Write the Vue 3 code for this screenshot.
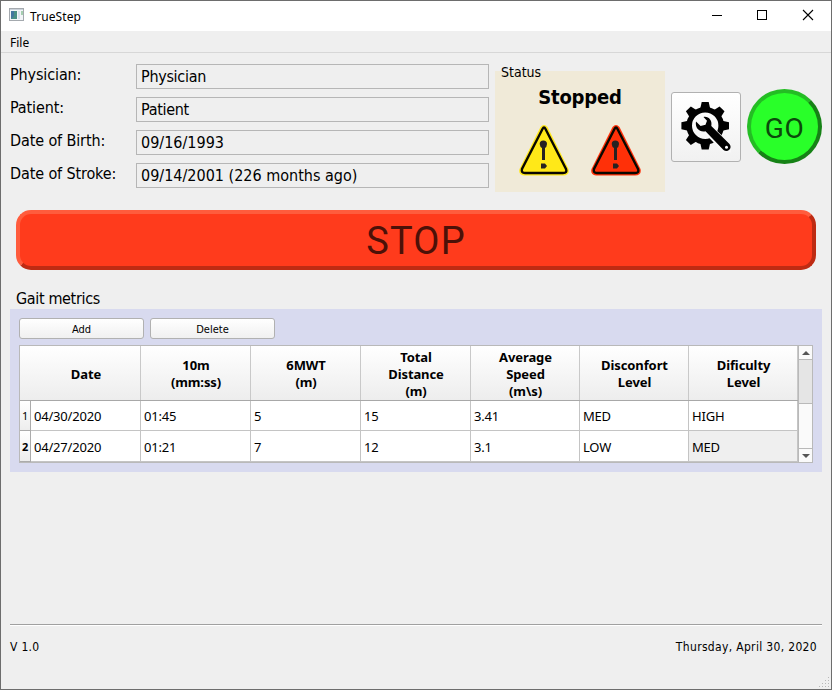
<script setup>
const fields = [
  { label: 'Physician:', value: 'Physician' },
  { label: 'Patient:', value: 'Patient' },
  { label: 'Date of Birth:', value: '09/16/1993' },
  { label: 'Date of Stroke:', value: '09/14/2001 (226 months ago)' },
]
const headers = ['Date', '10m\n(mm:ss)', '6MWT\n(m)', 'Total\nDistance\n(m)', 'Average\nSpeed\n(m\\s)', 'Disconfort\nLevel', 'Dificulty\nLevel']
const rows = [
  ['04/30/2020', '01:45', '5', '15', '3.41', 'MED', 'HIGH'],
  ['04/27/2020', '01:21', '7', '12', '3.1', 'LOW', 'MED'],
]
const warnings = ['#ffe818', '#ff3008']
const teeth = [0, 45, 90, 135, 180, 225, 270, 315]
</script>

<template>
  <div class="window">
    <header class="titlebar">
      <svg class="app-icon" width="15" height="13" viewBox="0 0 15 13">
        <rect x=".5" y=".5" width="14" height="12" fill="#f3f5f8" stroke="#a4a9ae" />
        <path d="M1 1.5H14" stroke="#cbd2da" />
        <rect x="2" y="3" width="6" height="8" fill="#4b8f86" />
        <path d="M2 3H5V8L2 11Z" fill="#4475a0" />
        <rect x="9" y="3" width="2" height="8" fill="#dce1ed" />
        <rect x="12" y="3" width="2" height="4" fill="#a5ceb0" />
      </svg>
      <span class="app-title">TrueStep</span>
      <svg class="controls" width="105" height="12" viewBox="0 0 105 12" fill="none" stroke="#000">
        <path d="M0 6.5H10" />
        <rect x="45.5" y="1.500" width="9" height="9" />
        <path d="M91 1L101 11M101 1L91 11" stroke-width="1.1" />
      </svg>
    </header>
    <nav class="menu"><span>File</span></nav>

    <main>
      <section class="top">
        <div class="form">
          <div v-for="f in fields" :key="f.label" class="field">
            <label>{{ f.label }}</label>
            <div class="value">{{ f.value }}</div>
          </div>
        </div>
        <div class="status">
          <div class="legend">Status</div>
          <div class="status-box">
            <strong>Stopped</strong>
            <div class="warnings">
              <svg v-for="c in warnings" :key="c" width="50" height="51" viewBox="0 0 50 51">
                <path d="M21.500 2Q25-2 28.500 2L49.500 44Q51 50.500 44 50.500H5Q-1 49.500 .5 44Z" :fill="c" />
                <path d="M23.500 4Q25 1 26.500 4L47 44Q48.500 48 44 48H6Q2 48 3 44Z" :fill="c" stroke="#090700" stroke-width="2.4" />
                <path d="M20.700 19Q20.700 15.500 24.300 15.500Q28 15.500 28 19Q27.800 22 26 23V35H23V23Q21 22 20.700 19Z" fill="#262222" />
                <path d="M22 38.500L26 38.500L28 41L26 43.500L22 43.500Z" fill="#262222" />
              </svg>
            </div>
          </div>
        </div>
        <button class="settings">
          <svg width="50" height="52" viewBox="0 0 50 52">
            <g transform="translate(24.200 24.700)">
              <path v-for="a in teeth" :key="a" :transform="`rotate(${a})`" d="M-5-17L-3.500-23.800H3.500L5-17Z" />
              <circle r="16" fill="none" stroke="#000" stroke-width="5.600" />
            </g>
            <path d="M29 25L49 44.500V50H43L24 30.500Z" fill="#f8f8f8" stroke="#f8f8f8" stroke-width="3" />
            <path d="M22.500 16C27.500 15 31.500 19.500 30.300 25L48.500 43C50 45 50 47 48.300 48.800C46.500 50.500 44.500 50.500 42.500 49L24.500 30.300C18.500 31.500 13.800 27 15 20.500L19.600 25L24.500 23.800L26 19.800Z" />
            <circle cx="45.500" cy="46.300" r="1.500" fill="#fff" />
          </svg>
        </button>
        <button class="go"><span>GO</span></button>
      </section>

      <button class="stop"><span>STOP</span></button>

      <h2>Gait metrics</h2>
      <section class="metrics">
        <div class="actions">
          <button>Add</button>
          <button>Delete</button>
        </div>
        <div class="table">
          <div class="grid">
            <div class="row head">
              <div v-for="h in headers" :key="h" class="cell">{{ h }}</div>
            </div>
            <div v-for="(r, i) in rows" :key="i" class="row body">
              <div class="index" :class="{ current: i === 1 }">{{ i + 1 }}</div>
              <div v-for="(c, j) in r" :key="j" class="cell" :class="{ selected: i === 1 && j === 6 }">{{ c }}</div>
            </div>
          </div>
          <div class="scrollbar">
            <div class="arrow"><svg width="8" height="4"><path d="M0 4L4 0L8 4Z" fill="#555" /></svg></div>
            <div class="track"></div>
            <div class="thumb"></div>
            <div class="arrow down"><svg width="8" height="4"><path d="M0 0L4 4L8 0Z" fill="#555" /></svg></div>
          </div>
        </div>
      </section>
    </main>

    <footer>
      <span class="version">V 1.0</span>
      <span class="date">Thursday, April 30, 2020</span>
    </footer>
    <svg class="grip" width="11" height="11" fill="#b8b8b8">
      <path d="M9 0h1v1h-1zM6 3h1v1h-1zM9 3h1v1h-1zM3 6h1v1h-1zM6 6h1v1h-1zM9 6h1v1h-1zM0 9h1v1h-1zM3 9h1v1h-1zM6 9h1v1h-1zM9 9h1v1h-1z" />
    </svg>
  </div>
</template>

<style>
body { margin: 0; }
</style>
<style scoped>
* { box-sizing: border-box; }
.window { position: relative; width: 832px; height: 690px; border: 1px solid #6d6d6d; background: #efefef; color: #000; font-family: "DejaVu Sans Condensed", "DejaVu Sans", sans-serif; font-size: 11px; display: flex; flex-direction: column; overflow: hidden; }
button { font-family: inherit; color: #000; padding: 0; }
.titlebar { height: 30px; flex: none; background: #fff; display: flex; align-items: center; padding-left: 8px; }
.app-icon { margin-top: -3px; }
.app-title { font: 12px "Noto Sans", sans-serif; margin-left: 6px; letter-spacing: .1px; }
.controls { margin: -2px 14px 0 auto; }
.menu { height: 22px; flex: none; border-bottom: 1px solid #d7d7d7; padding-left: 9px; font: 12px/23px "Noto Sans", sans-serif; }
main { padding: 11px 9px 0; flex: none; }
.top { display: flex; height: 146px; }
.form { width: 479px; display: flex; flex-direction: column; gap: 8px; }
.field { display: flex; height: 25px; font-size: 16px; white-space: nowrap; }
.field label { width: 126px; line-height: 21px; letter-spacing: -.12px; }
.value { flex: 1; border: 1px solid #b6b6b6; padding-left: 4px; line-height: 24px; letter-spacing: 0; }
.field:first-child .value, .field:nth-child(2) .value { letter-spacing: -.3px; }
.status { width: 170px; margin-left: 6px; }
.legend { height: 7px; line-height: 16px; padding-left: 6px; font-size: 14px; letter-spacing: 0; position: relative; }
.status-box { height: 121px; background: #f0ead8; display: flex; flex-direction: column; align-items: center; padding-top: 14px; }
.status-box strong { font-size: 20px; line-height: 24px; letter-spacing: -.2px; }
.warnings { display: flex; gap: 22px; margin-top: 16px; }
.settings { width: 70px; height: 70px; margin: 28px 0 0 6px; border: 1px solid #b1b1b1; border-radius: 3px; background: linear-gradient(#fff, #f1f1f1); display: flex; align-items: center; justify-content: center; }
.go { width: 75px; height: 75px; margin: 25px 0 0 6px; border: 4px solid; border-color: #24bd24 #168216 #168216 #24bd24; border-radius: 50%; background: #29ff29; color: #0b490b; font: 28px Roboto, sans-serif; }
.go span { position: relative; top: 2px; letter-spacing: .6px; }
.stop { display: block; width: 800px; height: 60px; margin-left: 6px; border: 4px solid; border-color: #ff5c3d #be2b13 #be2b13 #ff5c3d; border-radius: 15px; background: #ff3b1c; color: #4c1108; font: 38px Roboto, sans-serif; }
.stop span { position: relative; top: 1px; letter-spacing: 1.2px; }
h2 { font-size: 16px; font-weight: 400; line-height: 20px; margin: 19px 0 0 6px; letter-spacing: -.35px; }
.metrics { height: 163px; background: #d8daef; padding: 9px; }
.actions { display: flex; gap: 6px; height: 27px; }
.actions button { width: 125px; height: 21px; border: 1px solid #b1b1b1; border-radius: 3px; background: linear-gradient(#fff, #f0f0f0); font-size: 11px; padding-top: 1px; }
.table { width: 794px; height: 118px; border: 1px solid #b9b9b9; background: #fff; display: flex; }
.grid { width: 778px; }
.row { display: grid; }
.head { height: 55px; grid-template-columns: 121px 110px 110px 110px 109px 109px 109px; border-bottom: 1px solid #a8a8a8; background: linear-gradient(#fff, #ededed); font: bold 13px/17px "Noto Sans", sans-serif; text-align: center; white-space: pre; letter-spacing: -.1px; }
.head .cell { display: flex; align-items: center; justify-content: center; border-right: 1px solid #c9c9c9; padding: 2px 0 0 1px; }
.head .cell:first-child { padding-left: 12px; }
.body { height: 30px; grid-template-rows: 100%; grid-template-columns: 11px 110px 110px 110px 110px 109px 109px 109px; font: 13px/30px "Noto Sans", sans-serif; letter-spacing: -.2px; }
.body:last-child { height: 31px; line-height: 32px; }
.body .cell { border: 0 solid #c4c4c4; border-width: 0 1px 1px 0; padding-left: 3px; }
.index { border: 0 solid #ababab; border-width: 0 1px 1px 0; background: linear-gradient(#fff, #ededed); font-size: 11px; text-align: center; }
.current { font-weight: 700; }
.selected { background: #efefef; }
.scrollbar { width: 14px; border-left: 1px solid #b9b9b9; display: flex; flex-direction: column; background: #fafafa; }
.arrow { height: 14px; flex: none; border-bottom: 1px solid #b9b9b9; display: flex; align-items: center; justify-content: center; }
.track { height: 44px; flex: none; background: #e5e5e5; border-bottom: 1px solid #b9b9b9; }
.thumb { flex: 1; }
.down { border-top: 1px solid #b9b9b9; border-bottom: 0; }
footer { margin: auto 9px 20px; height: 45px; border-top: 1px solid #a0a0a0; box-shadow: inset 0 1px #fff; display: flex; justify-content: space-between; padding: 14px 5px 0 0; font-size: 12px; line-height: 16px; }
.date { letter-spacing: .33px; }
.version { letter-spacing: .3px; }
.grip { position: absolute; right: 1px; bottom: 1px; }
</style>
